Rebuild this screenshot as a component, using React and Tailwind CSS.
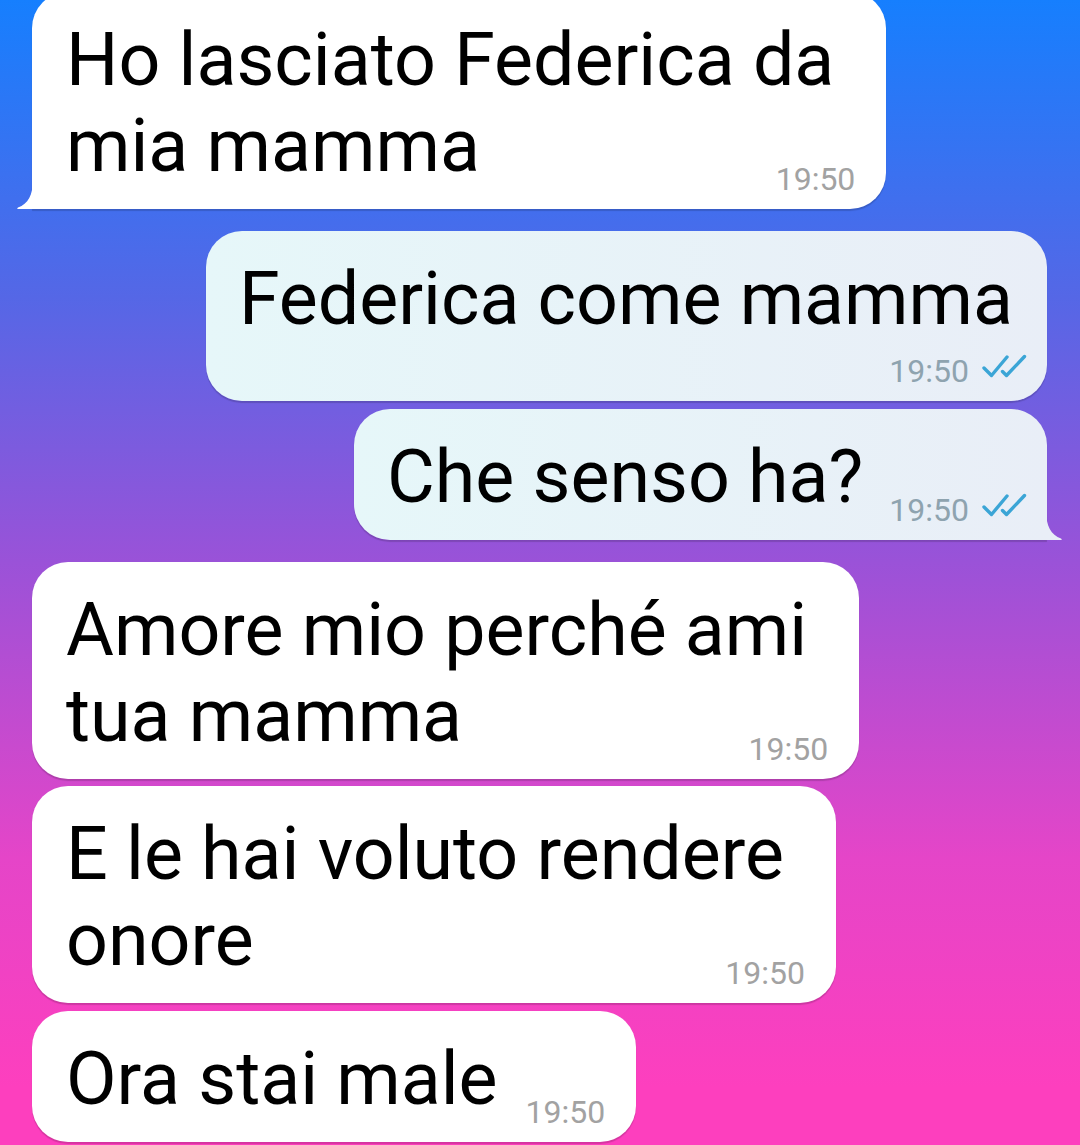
import clsx from "clsx";

const cn = clsx;

const messages = [
  { id: 1, out: false, lines: ["Ho lasciato Federica da", "mia mamma"], layout: "stack", tail: true, className: "-mt-[8px] pb-[17px]" },
  { id: 2, out: true, lines: ["Federica come mamma"], layout: "below", className: "mt-[22px]" },
  { id: 3, out: true, lines: ["Che senso ha?"], layout: "inline", tail: true, className: "mt-[8px] pb-[14px]" },
  { id: 4, out: false, lines: ["Amore mio perché ami", "tua mamma"], layout: "stack", className: "mt-[22px] pb-[19px]" },
  { id: 5, out: false, lines: ["E le hai voluto rendere", "onore"], layout: "stack", className: "mt-[7px] pb-[19px]" },
  { id: 6, out: false, lines: ["Ora stai male"], layout: "inline", className: "mt-[8px]" },
];

// telegram style double tick
const DoubleCheck = () => (
  <svg width="45" height="24" viewBox="0 0 45 24" fill="none" className="-mt-[7px] mb-[3px] shrink-0">
    <path d="M2 14 L9.5 21.5 L25 3" stroke="#3ba5d6" strokeWidth="3.4" strokeLinecap="round" strokeLinejoin="round" />
    <path d="M20.5 17.5 L24.5 21.5 L42.5 2.5" stroke="#3ba5d6" strokeWidth="3.4" strokeLinecap="round" strokeLinejoin="round" />
  </svg>
);

const Time = ({ out }) => (
  <div className="flex items-end gap-[13px] shrink-0">
    <span className={cn("text-[32px] leading-[20px]", out ? "text-[#8ea3af]" : "text-[#a2a2a2]")}>19:50</span>
    {out && <DoubleCheck />}
  </div>
);

const Tail = ({ out }) =>
  out ? (
    <svg width="18" height="30" viewBox="0 0 18 30" className="absolute -right-[16px] bottom-0">
      <path d="M0 0 L1 0 C1 16 6 25 16 28.5 Q18 30 15 30 L0 30 Z" fill="#e9eef7" />
    </svg>
  ) : (
    <svg width="18" height="30" viewBox="0 0 18 30" className="absolute -left-[16px] bottom-0">
      <path d="M18 0 L17 0 C17 16 12 25 2 28.5 Q0 30 3 30 L18 30 Z" fill="#ffffff" />
    </svg>
  );

const Bubble = ({ msg }) => {
  const { out, lines, layout, tail } = msg;
  const text = (
    <p
      className={cn(
        "text-[73.5px] leading-[86px] text-black whitespace-nowrap",
        layout === "stack" && "pr-[21px]",
        layout === "below" && "pr-[14px]"
      )}
    >
      {lines.map((l, i) => (
        <span key={i} className="block">
          {l}
        </span>
      ))}
    </p>
  );

  return (
    <div className={cn("flex", out ? "justify-end pr-[33px]" : "justify-start pl-[32px]")}>
      <div
        className={cn(
          "relative rounded-[36px] shadow-[0_1.5px_1px_rgba(0,0,0,0.16)]",
          out ? "bg-linear-to-r from-[#e6f7f9] to-[#e9eef7] pl-[33px] pr-[20px]" : "bg-white pl-[34px] pr-[31px]",
          layout === "inline" && !out && "pr-[30px]",
          tail && (out ? "rounded-br-none" : "rounded-bl-none"),
          "pt-[25px] pb-[20px]",
          layout === "stack" && "pt-[24px]",
          layout === "inline" && "pb-[17px] flex items-end",
          layout === "inline" && (out ? "gap-[26px]" : "gap-[28px]"),
          msg.className
        )}
      >
        {text}
        {layout === "inline" && <Time out={out} />}
        {layout === "stack" && (
          <div className="flex justify-end -mt-[20px]">
            <Time out={out} />
          </div>
        )}
        {layout === "below" && (
          <div className="flex justify-end mt-[19px]">
            <Time out={out} />
          </div>
        )}
        {tail && <Tail out={out} />}
      </div>
    </div>
  );
};

export default function App() {
  return (
    <div
      className="h-[1145px] w-[1080px] overflow-hidden bg-[linear-gradient(to_bottom,#167ffe_0%,#5567e6_26%,#9a52d8_49%,#e545c8_75%,#fd3fbe_95%)]"
      style={{ fontFamily: "Roboto, 'Noto Sans', sans-serif" }}
    >
      <div className="flex flex-col">
        {messages.map((m) => (
          <Bubble key={m.id} msg={m} />
        ))}
      </div>
    </div>
  );
}
